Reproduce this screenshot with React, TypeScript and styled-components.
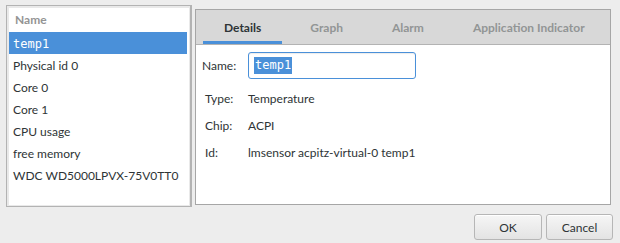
import React, { useState } from 'react';
import styled, { createGlobalStyle } from 'styled-components';

const GlobalStyle = createGlobalStyle`
  html, body {
    margin: 0;
    padding: 0;
    background: #ededed;
  }
  body {
    font-family: 'Lato', 'Liberation Sans', sans-serif;
    font-size: 12px;
    color: #2e3436;
  }
`;

const Dialog = styled.div`
  width: 620px;
  height: 243px;
  box-sizing: border-box;
  padding: 5px 7px 0 6px;
  display: flex;
  flex-direction: column;
`;

const Body = styled.div`
  display: flex;
  align-items: flex-start;
  gap: 3px;
`;

const ListFrame = styled.div`
  width: 186px;
  height: 202px;
  box-sizing: border-box;
  border: 1px solid #b3b3b3;
  border-right-width: 2px;
  background: #e9e9e9;
  padding: 2px 1px 1px 2px;
`;

const TreeView = styled.div`
  height: 100%;
  background: #ffffff;
  display: flex;
  flex-direction: column;
`;

const Header = styled.div`
  height: 24px;
  line-height: 24px;
  padding-left: 6px;
  color: #949494;
  font-weight: 700;
`;

const Row = styled.div<{ $selected?: boolean }>`
  height: 22px;
  line-height: 23px;
  padding-left: 4px;
  margin-right: 2px;
  white-space: nowrap;
  background: ${p => (p.$selected ? '#4a90d9' : 'transparent')};
  color: ${p => (p.$selected ? '#ffffff' : '#2e3436')};
`;

const Mono = styled.span`
  font-family: 'DejaVu Sans Mono', 'Liberation Mono', monospace;
  font-size: 12px;
`;

const Notebook = styled.div`
  margin-top: 4px;
  width: 416px;
  height: 196px;
  box-sizing: border-box;
  border: 1px solid #a6a6a6;
  background: #ffffff;
  display: flex;
  flex-direction: column;
`;

const TabBar = styled.div`
  height: 34px;
  background: #d8d8d8;
  border-bottom: 1px solid #b3b3b3;
  display: flex;
  gap: 7px;
  padding-left: 7px;
`;

const Tab = styled.div<{ $active?: boolean }>`
  padding: 0 21px;
  display: flex;
  align-items: center;
  font-weight: 700;
  color: ${p => (p.$active ? '#2e3436' : '#929595')};
  box-shadow: ${p => (p.$active ? 'inset 0 -3px 0 #4a90d9' : 'none')};
`;

const Details = styled.div`
  padding: 7px 0 0 6px;
  display: grid;
  grid-template-columns: 46px auto;
  align-items: center;
`;

const Label = styled.div<{ $indent?: boolean }>`
  padding-left: ${p => (p.$indent ? '3px' : '0')};
  height: 27px;
  line-height: 27px;
`;

const Value = styled.div`
  height: 27px;
  line-height: 27px;
  white-space: nowrap;
`;

const InputBox = styled.div`
  width: 168px;
  height: 27px;
  box-sizing: border-box;
  border: 1px solid #4a90d9;
  border-radius: 3px;
  background: #ffffff;
  box-shadow: inset 0 1px 1px rgba(0, 0, 0, 0.08);
  display: flex;
  align-items: center;
  padding-left: 5px;
`;

const Selection = styled(Mono)`
  background: #4a90d9;
  color: #ffffff;
  line-height: 17px;
  padding: 0 1px;
`;

const Spacer = styled.div<{ $h: number }>`
  grid-column: 1 / -1;
  height: ${p => p.$h}px;
`;

const Buttons = styled.div`
  display: flex;
  justify-content: flex-end;
  gap: 4px;
  margin-top: 7px;
`;

const Button = styled.button<{ $w: number }>`
  width: ${p => p.$w}px;
  height: 26px;
  border: 1px solid #b6b6b6;
  border-radius: 3px;
  background: linear-gradient(#f6f6f6, #e3e3e3);
  box-shadow: inset 0 1px 0 #ffffff;
  font-family: 'Lato', 'Liberation Sans', sans-serif;
  font-size: 12px;
  color: #2e3436;
  padding: 0;
`;

const sensors = [
  'Physical id 0',
  'Core 0',
  'Core 1',
  'CPU usage',
  'free memory',
  'WDC WD5000LPVX-75V0TT0',
];

const tabs = ['Details', 'Graph', 'Alarm', 'Application Indicator'];

export default function App() {
  const [active] = useState('Details');

  return (
    <>
      <GlobalStyle />
      <Dialog>
        <Body>
          <ListFrame>
            <TreeView>
              <Header>Name</Header>
              <Row $selected>
                <Mono>temp1</Mono>
              </Row>
              {sensors.map(s => (
                <Row key={s}>{s}</Row>
              ))}
            </TreeView>
          </ListFrame>

          <Notebook>
            <TabBar>
              {tabs.map(t => (
                <Tab key={t} $active={t === active}>
                  {t}
                </Tab>
              ))}
            </TabBar>
            <Details>
              <Label>Name:</Label>
              <InputBox>
                <Selection>temp1</Selection>
              </InputBox>
              <Spacer $h={6} />
              <Label $indent>Type:</Label>
              <Value>Temperature</Value>
              <Label $indent>Chip:</Label>
              <Value>ACPI</Value>
              <Label $indent>Id:</Label>
              <Value>lmsensor acpitz-virtual-0 temp1</Value>
            </Details>
          </Notebook>
        </Body>

        <Buttons>
          <Button $w={68}>OK</Button>
          <Button $w={67}>Cancel</Button>
        </Buttons>
      </Dialog>
    </>
  );
}
